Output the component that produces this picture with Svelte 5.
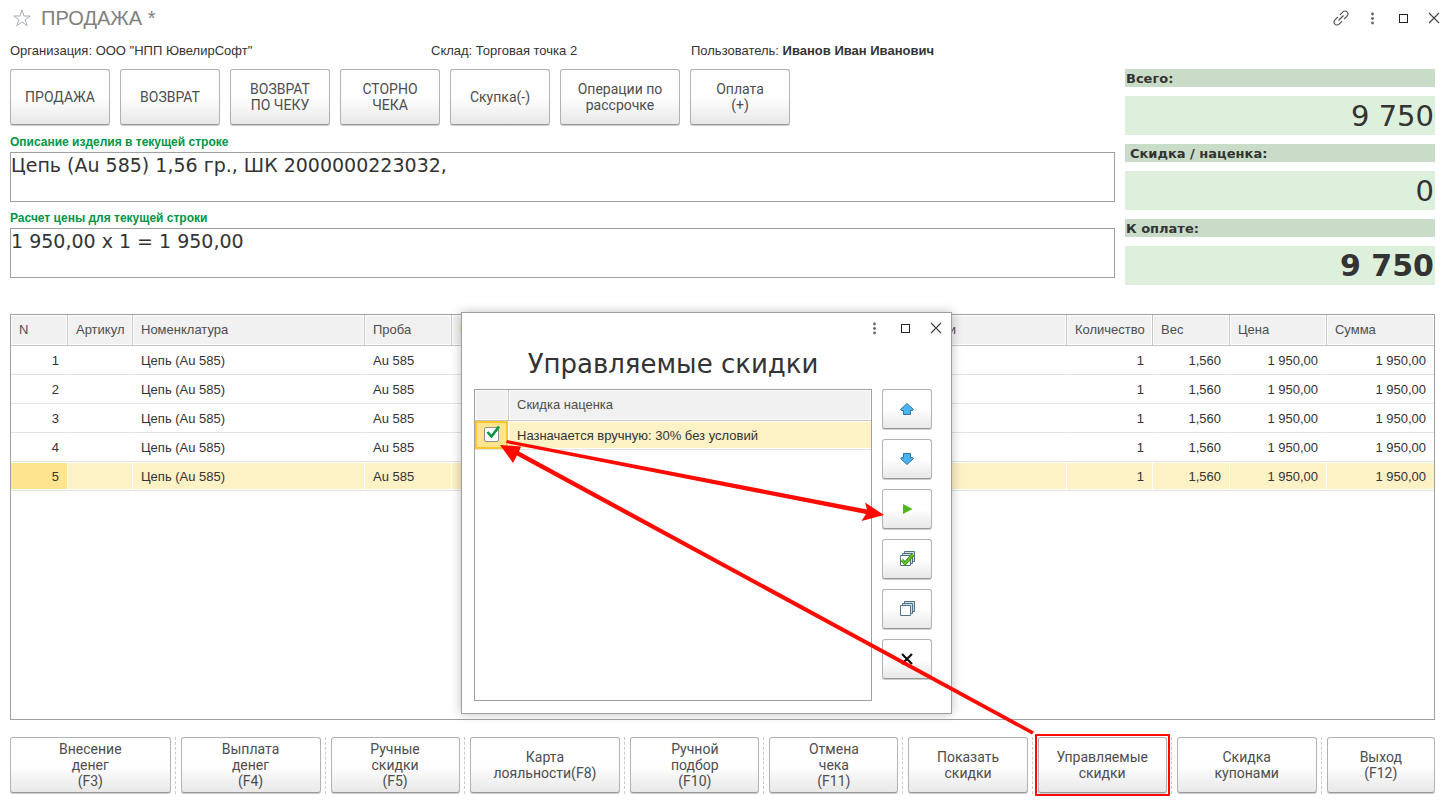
<script lang="ts">
	interface Action {
		lines: string[];
		width: number;
		active?: boolean;
	}

	const topActions: Action[] = [
		{ lines: ['ПРОДАЖА'], width: 100 },
		{ lines: ['ВОЗВРАТ'], width: 100 },
		{ lines: ['ВОЗВРАТ', 'ПО ЧЕКУ'], width: 100 },
		{ lines: ['СТОРНО', 'ЧЕКА'], width: 100 },
		{ lines: ['Скупка(-)'], width: 100 },
		{ lines: ['Операции по', 'рассрочке'], width: 120 },
		{ lines: ['Оплата', '(+)'], width: 100 }
	];

	const bottomActions: Action[] = [
		{ lines: ['Внесение', 'денег', '(F3)'], width: 161 },
		{ lines: ['Выплата', 'денег', '(F4)'], width: 140 },
		{ lines: ['Ручные', 'скидки', '(F5)'], width: 129 },
		{ lines: ['Карта', 'лояльности(F8)'], width: 151 },
		{ lines: ['Ручной', 'подбор', '(F10)'], width: 129 },
		{ lines: ['Отмена', 'чека', '(F11)'], width: 129 },
		{ lines: ['Показать', 'скидки'], width: 119 },
		{ lines: ['Управляемые', 'скидки'], width: 129, active: true },
		{ lines: ['Скидка', 'купонами'], width: 140 },
		{ lines: ['Выход', '(F12)'], width: 108 }
	];

	const totals = [
		{ label: 'Всего:', value: '9 750' },
		{ label: 'Скидка / наценка:', value: '0', indent: true },
		{ label: 'К оплате:', value: '9 750', strong: true }
	];

	const columns = [
		{ title: 'N', width: 57 },
		{ title: 'Артикул', width: 65 },
		{ title: 'Номенклатура', width: 232 },
		{ title: 'Проба', width: 87 },
		{ title: 'Размер', width: 448 },
		{ title: 'Вставки', width: 167 },
		{ title: 'Количество', width: 86 },
		{ title: 'Вес', width: 77 },
		{ title: 'Цена', width: 97 },
		{ title: 'Сумма', width: 107 }
	];

	const tableWidth = columns.reduce((sum, c) => sum + c.width, 0);

	const rows = [1, 2, 3, 4, 5].map((n) => ({
		n,
		name: 'Цепь (Au 585)',
		probe: 'Au 585',
		count: '1',
		weight: '1,560',
		price: '1 950,00',
		sum: '1 950,00'
	}));

	let description = $state('Цепь (Au 585) 1,56 гр., ШК 2000000223032,');
	let calculation = $state('1 950,00 x 1 = 1 950,00');
	let selected = $state(5);
	let discountOn = $state(true);
</script>

{#snippet windowControls()}
	<button class="icon-btn" type="button" aria-label="Ещё">
		<svg width="16" height="16" viewBox="0 0 16 16" fill="#666">
			<circle cx="8.5" cy="4" r="1.4" />
			<circle cx="8.5" cy="8.5" r="1.4" />
			<circle cx="8.5" cy="13" r="1.4" />
		</svg>
	</button>
	<button class="icon-btn" type="button" aria-label="Развернуть">
		<svg width="16" height="16" viewBox="0 0 16 16" fill="none" stroke="#222">
			<rect x="4.5" y="4.5" width="8" height="8" />
		</svg>
	</button>
	<button class="icon-btn" type="button" aria-label="Закрыть">
		<svg width="16" height="16" viewBox="0 0 16 16" fill="none" stroke="#444" stroke-width="1.2">
			<path d="M3 3l10 10M13 3L3 13" />
		</svg>
	</button>
{/snippet}

<div class="page">
	<header class="titlebar">
		<button class="icon-btn star" type="button" aria-label="В избранное">
			<svg width="18" height="18" viewBox="0 0 18 18" fill="none" stroke="#a9afb5">
				<path d="M9 1L11 7H17.200L12.200 10.800 14.200 16.700 9 13 3.800 16.700 5.800 10.800 0.800 7H7z" />
			</svg>
		</button>
		<h1>ПРОДАЖА *</h1>
		<div class="controls">
			<button class="icon-btn" type="button" aria-label="Ссылка">
				<svg width="18" height="18" viewBox="0 0 18 18" fill="none" stroke="#555" stroke-width="1.2">
					<path d="M6.500 11.500l5-5" />
					<path d="M8 5.800l2.900-2.900a2.900 2.900 0 0 1 4.200 0 2.900 2.900 0 0 1 0 4.200L12.200 10" />
					<path d="M10 12.200l-2.900 2.900a2.900 2.900 0 0 1-4.200 0 2.900 2.900 0 0 1 0-4.200L5.800 8" />
				</svg>
			</button>
			{@render windowControls()}
		</div>
	</header>

	<div class="info">
		<span class="org">Организация: ООО "НПП ЮвелирСофт"</span>
		<span class="store">Склад: Торговая точка 2</span>
		<span>Пользователь: <b>Иванов Иван Иванович</b></span>
	</div>

	<div class="upper">
		<div class="left">
			<div class="toolbar">
				{#each topActions as action}
					<button class="btn" type="button" style="width: {action.width}px">
						{#each action.lines as line}<span>{line}</span>{/each}
					</button>
				{/each}
			</div>
			<label class="caption" for="description">Описание изделия в текущей строке</label>
			<textarea id="description" bind:value={description}></textarea>
			<label class="caption" for="calculation">Расчет цены для текущей строки</label>
			<textarea id="calculation" bind:value={calculation}></textarea>
		</div>

		<div class="totals">
			{#each totals as total}
				<div class="total-label" class:indent={total.indent}>{total.label}</div>
				<div class="total-value" class:strong={total.strong}>{total.value}</div>
			{/each}
		</div>
	</div>

	<main class="goods">
		<table>
			<colgroup>
				{#each columns as column}
					<col style="width: {(column.width / tableWidth) * 100}%" />
				{/each}
			</colgroup>
			<thead>
				<tr>
					{#each columns as column}
						<th>{column.title}</th>
					{/each}
				</tr>
			</thead>
			<tbody>
				{#each rows as row}
					<tr class:selected={selected === row.n} onclick={() => (selected = row.n)}>
						<td class="num first">{row.n}</td>
						<td></td>
						<td>{row.name}</td>
						<td>{row.probe}</td>
						<td></td>
						<td></td>
						<td class="num">{row.count}</td>
						<td class="num">{row.weight}</td>
						<td class="num">{row.price}</td>
						<td class="num">{row.sum}</td>
					</tr>
				{/each}
			</tbody>
		</table>
	</main>

	<footer class="bottom">
		{#each bottomActions as action, i}
			{#if i > 0}<i class="sep"></i>{/if}
			<button class="btn" class:active={action.active} type="button" style="flex-grow: {action.width}">
				{#each action.lines as line}<span>{line}</span>{/each}
			</button>
		{/each}
	</footer>

	<div class="dialog" role="dialog" aria-labelledby="dialog-title">
		<div class="controls dialog-controls">
			{@render windowControls()}
		</div>
		<h2 id="dialog-title">Управляемые скидки</h2>
		<div class="dialog-body">
			<div class="discounts">
				<table>
					<colgroup>
						<col class="check-col" />
						<col />
					</colgroup>
					<thead>
						<tr>
							<th aria-label="Выбор"></th>
							<th>Скидка наценка</th>
						</tr>
					</thead>
					<tbody>
						<tr class="selected">
							<td class="check">
								<input id="discount" type="checkbox" bind:checked={discountOn} />
								<svg class="tick" class:off={!discountOn} width="16" height="16" viewBox="0 0 16 16">
									<path d="M2.500 7l4 4.500L14 1.500" fill="none" stroke="#009646" stroke-width="2.600" />
								</svg>
							</td>
							<td><label for="discount">Назначается вручную: 30% без условий</label></td>
						</tr>
					</tbody>
				</table>
			</div>
			<div class="side">
				<button class="btn" type="button" aria-label="Вверх">
					<svg width="16" height="16" viewBox="0 0 16 16" fill="#4ab4ee" stroke="#2f739f">
						<path d="M8 2.500L14.500 8.500 13.500 9.500H11.500V13.500H4.500V9.500H2.500L1.500 8.500z" stroke-linejoin="round" />
					</svg>
				</button>
				<button class="btn" type="button" aria-label="Вниз">
					<svg width="16" height="16" viewBox="0 0 16 16" fill="#4ab4ee" stroke="#2f739f">
						<path d="M8 13.500L1.500 7.500 2.500 6.500H4.500V2.500H11.500V6.500H13.500L14.500 7.500z" stroke-linejoin="round" />
					</svg>
				</button>
				<button class="btn" type="button" aria-label="Применить">
					<svg width="16" height="16" viewBox="0 0 16 16" fill="#4fb81c">
						<path d="M4 3l9.500 5L4 13z" />
					</svg>
				</button>
				<button class="btn" type="button" aria-label="Отметить все">
					<svg width="16" height="16" viewBox="0 0 16 16" fill="#fff" stroke="#4f7288">
						<path d="M5.500 0.500h10v10h-10z" fill="#cfdde6" />
						<path d="M3.500 2.500h10v10h-10z" fill="#cfdde6" />
						<path d="M1.500 4.500h10v10h-10z" />
						<path d="M3 9l3 3.500L14 3.500" fill="none" stroke="#3c9212" stroke-width="3.400" />
						<path d="M3 9l3 3.500L14 3.500" fill="none" stroke="#65c832" stroke-width="1.600" />
					</svg>
				</button>
				<button class="btn" type="button" aria-label="Снять отметки">
					<svg width="16" height="16" viewBox="0 0 16 16" fill="#fff" stroke="#4f7288">
						<path d="M5.500 0.500h10v10h-10z" fill="#cfdde6" />
						<path d="M3.500 2.500h10v10h-10z" fill="#cfdde6" />
						<path d="M1.500 4.500h10v10h-10z" />
					</svg>
				</button>
				<button class="btn" type="button" aria-label="Отмена">
					<svg width="16" height="16" viewBox="0 0 16 16" fill="none" stroke="#111" stroke-width="2.200">
						<path d="M3 3l10 10M13 3L3 13" />
					</svg>
				</button>
			</div>
		</div>
	</div>

	<!-- Step pointers: button -> tick box -> apply -->
	<svg class="pointers" width="1200" height="800" viewBox="0 0 1200 800" fill="#ff0a00">
		<path d="M1032 734.500L1034 731.500 519 451.500 521 446.500 500 445 513 463 517 455.500z" />
		<path d="M506 443L507 440 867 509.500 865 502.500 884 515 861.500 521 866 514z" />
	</svg>
</div>

<style>
	:global(body) {
		margin: 0;
		background: #fff;
	}

	.page {
		position: relative;
		display: flex;
		flex-direction: column;
		box-sizing: border-box;
		min-height: 100vh;
		padding: 0 18px 7px 10px;
		font-family: 'Liberation Sans', Arial, sans-serif;
		font-size: 13px;
		line-height: 16px;
		color: #333;
		overflow: hidden;
	}

	h1,
	h2 {
		margin: 0;
		font-weight: normal;
	}

	.titlebar {
		display: flex;
		align-items: center;
		height: 36px;
	}

	h1 {
		flex: 1;
		margin-left: 7px;
		font-size: 20px;
		line-height: 24px;
		color: #808080;
	}

	.icon-btn {
		display: flex;
		align-items: center;
		justify-content: center;
		width: 24px;
		height: 24px;
		padding: 0;
		border: 0;
		background: none;
	}

	.controls {
		display: flex;
		gap: 7px;
		margin-right: -11px;
	}

	.info {
		display: flex;
		height: 33px;
		align-items: center;
		padding-bottom: 4px;
		box-sizing: border-box;
	}

	.org {
		width: 421px;
	}

	.store {
		width: 260px;
	}

	.upper {
		display: flex;
		gap: 10px;
	}

	.left {
		display: flex;
		flex: 1;
		flex-direction: column;
	}

	.toolbar {
		display: flex;
		gap: 10px;
	}

	.btn {
		position: relative;
		display: flex;
		flex-direction: column;
		align-items: center;
		justify-content: center;
		box-sizing: border-box;
		height: 56px;
		margin: 0 0 1px;
		padding: 0;
		border: 1px solid #b2b2b2;
		border-bottom-color: #999;
		border-radius: 3px;
		background: linear-gradient(#fff 50%, #e8e8e8);
		box-shadow: 0 1px #ccc;
		font-family: Roboto, sans-serif;
		font-size: 14px;
		line-height: 16px;
		color: #4d4d4d;
		white-space: nowrap;
	}

	.caption {
		display: flex;
		align-items: flex-end;
		height: 26px;
		font-size: 12px;
		font-weight: bold;
		line-height: 20px;
		color: #009646;
	}

	textarea {
		box-sizing: border-box;
		height: 50px;
		margin: 0;
		padding: 0;
		border: 1px solid #a0a0a0;
		font-family: 'DejaVu Sans', Verdana, sans-serif;
		font-size: 19px;
		line-height: 24px;
		color: #333;
		resize: none;
		outline: 0;
	}

	.totals {
		display: flex;
		flex-direction: column;
		gap: 9px;
		width: 310px;
		font-family: 'DejaVu Sans', Verdana, sans-serif;
	}

	.total-label {
		height: 18px;
		padding-left: 1px;
		background: #c9dcc7;
		font-weight: bold;
		line-height: 20px;
	}

	.total-label.indent {
		padding-left: 5px;
	}

	.total-value {
		height: 39px;
		padding-right: 1px;
		background: #ddf0dc;
		font-size: 29px;
		line-height: 40px;
		text-align: right;
	}

	.total-value.strong {
		font-size: 30px;
		font-weight: bold;
	}

	.goods {
		flex: 1;
		margin-top: 29px;
		border: 1px solid #a0a0a0;
	}

	table {
		width: 100%;
		border-collapse: separate;
		border-spacing: 0;
		table-layout: fixed;
	}

	th {
		box-sizing: border-box;
		height: 31px;
		padding: 0 0 0 8px;
		border-right: 1px solid #c4c4c4;
		border-bottom: 1px solid #c4c4c4;
		background: #f1f1f1;
		box-shadow: inset 0 0 0 1px #fff;
		font-weight: normal;
		text-align: left;
		color: #4d4d4d;
		white-space: nowrap;
	}

	th:last-child,
	td:last-child {
		border-right: 0;
	}

	td {
		box-sizing: border-box;
		height: 29px;
		padding: 2px 8px 0;
		border-right: 1px solid transparent;
		border-bottom: 1px solid #e2e2e2;
		white-space: nowrap;
	}

	.num {
		text-align: right;
	}

	.selected td {
		border-right-color: #fff;
		background: #fdf1c6;
		background-clip: padding-box;
		box-shadow: inset 0 1px #fff, inset 0 -1px #fff;
	}

	.selected .first {
		background-color: #ffe48f;
	}

	.bottom {
		display: flex;
		margin-top: 17px;
	}

	.bottom .btn {
		flex-basis: 0;
	}

	.bottom .active::after {
		content: '';
		position: absolute;
		inset: -4px;
		border: 2px solid #ff0a00;
		border-radius: 1px;
	}

	.sep {
		width: 4px;
		margin-right: 5px;
		border-right: 1px dashed #ccc;
	}

	.dialog {
		position: absolute;
		top: 312px;
		left: 461px;
		box-sizing: border-box;
		width: 491px;
		padding: 3px 19px 12px 12px;
		border: 1px solid #a0a0a0;
		background: #fff;
		box-shadow: 0 0 10px rgba(0, 0, 0, 0.25);
	}

	.dialog-controls {
		justify-content: flex-end;
		margin-right: -16px;
	}

	h2 {
		margin: 9px 0;
		font-family: 'DejaVu Sans', Verdana, sans-serif;
		font-size: 26px;
		line-height: 31px;
		text-align: center;
		padding-right: 60px;
	}

	.dialog-body {
		display: flex;
		gap: 10px;
	}

	.discounts {
		flex: 1;
		border: 1px solid #a0a0a0;
	}

	.check-col {
		width: 34px;
	}

	.discounts .check {
		position: relative;
		padding: 0;
		background-color: #ffe48f;
		box-shadow: inset 0 0 0 2px #fcc72c;
	}

	.check input {
		display: block;
		appearance: none;
		box-sizing: border-box;
		width: 15px;
		height: 15px;
		margin: 0 0 2px 9px;
		border: 1px solid #8f8f8f;
		border-radius: 2px;
		background: #fff;
	}

	.tick {
		position: absolute;
		top: 4px;
		left: 10px;
		pointer-events: none;
	}

	.tick.off {
		display: none;
	}

	.side {
		display: flex;
		flex-direction: column;
		gap: 9px;
		padding-bottom: 21px;
	}

	.side .btn {
		width: 50px;
		height: 40px;
	}

	.pointers {
		position: absolute;
		top: 0;
		left: 0;
		pointer-events: none;
	}
</style>
